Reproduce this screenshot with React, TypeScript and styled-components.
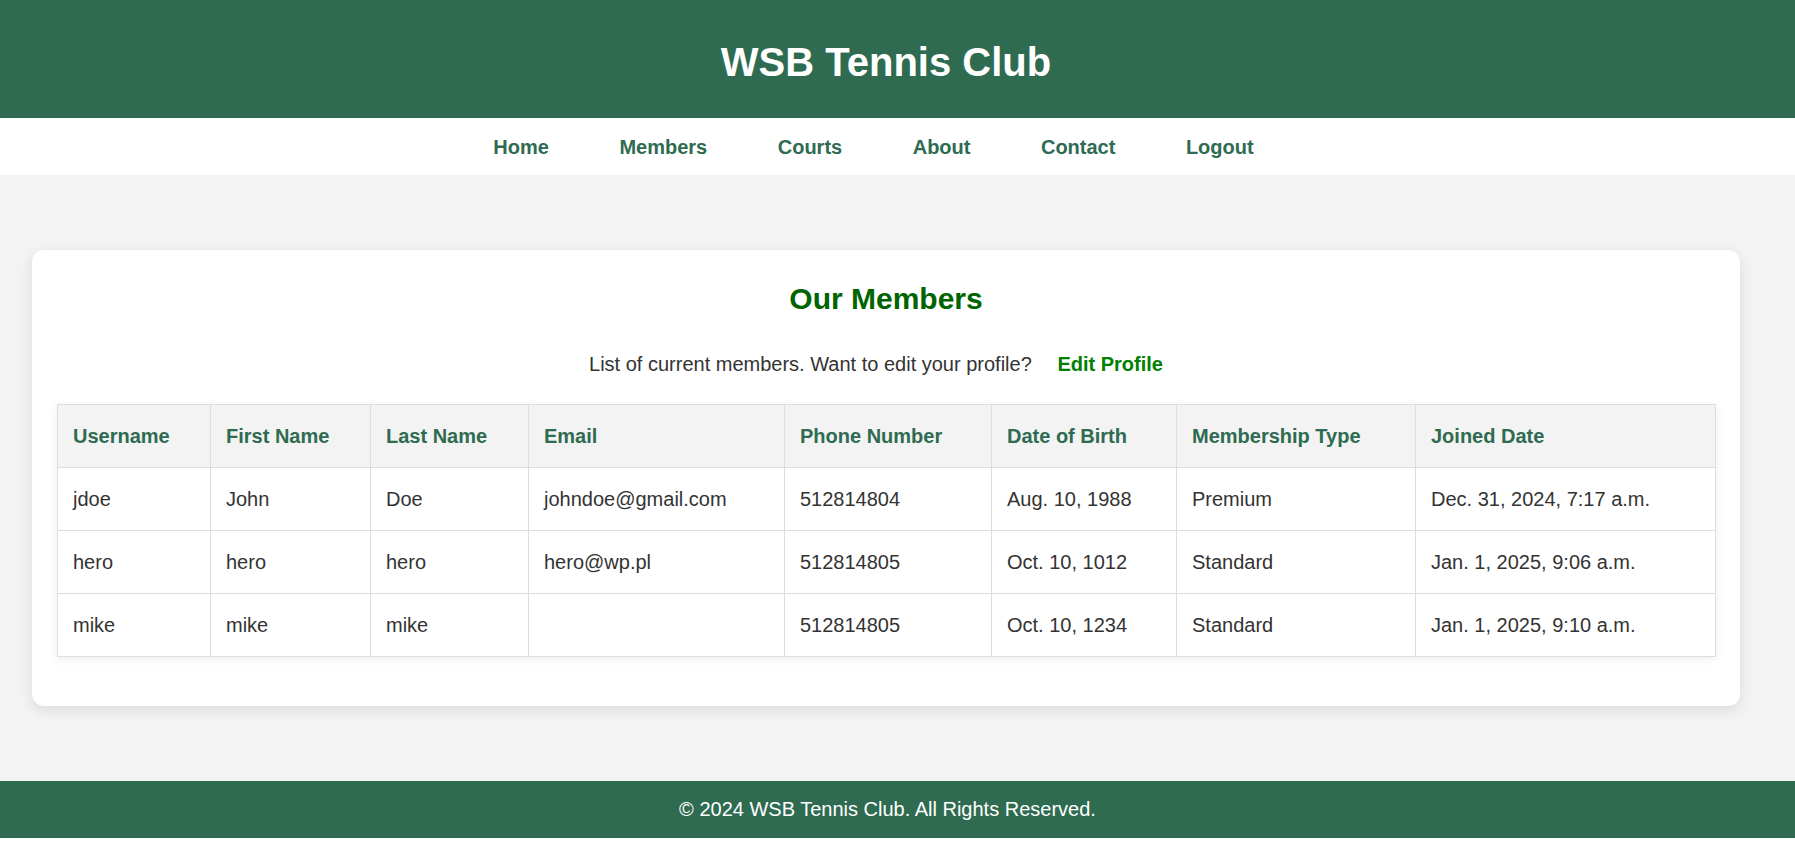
import React from "react";
import styled, { createGlobalStyle } from "styled-components";

const GlobalStyle = createGlobalStyle`
  html, body {
    margin: 0;
    padding: 0;
    background: #ffffff;
  }
  body {
    font-family: "Liberation Sans", Arial, sans-serif;
    color: #333333;
  }
  * { box-sizing: border-box; }
`;

const GREEN = "#2e6b51";

const Header = styled.header`
  background: ${GREEN};
  padding: 39px 23px 33px 0;
  text-align: center;
`;

const SiteTitle = styled.h1`
  margin: 0;
  font-size: 40px;
  line-height: 46px;
  font-weight: 700;
  color: #ffffff;
`;

const Nav = styled.nav`
  background: #ffffff;
  padding: 18px 48px 16px 0;
`;

const NavList = styled.ul`
  list-style: none;
  margin: 0;
  padding: 0;
  display: flex;
  justify-content: center;
  gap: 70.5px;
`;

const NavLink = styled.a`
  display: block;
  font-size: 20px;
  line-height: 23px;
  font-weight: 700;
  color: ${GREEN};
  text-decoration: none;
`;

const Main = styled.main`
  background: #f3f3f3;
  padding: 75px 55px 75px 32px;
`;

const Card = styled.section`
  background: #ffffff;
  border-radius: 12px;
  box-shadow: 0 4px 14px rgba(0, 0, 0, 0.1);
  padding: 25px;
`;

const CardTitle = styled.h2`
  margin: 7px 0 0;
  text-align: center;
  font-size: 30px;
  line-height: 34px;
  font-weight: 700;
  color: #006400;
`;

const Intro = styled.p`
  margin: 37px 0 0;
  text-align: center;
  font-size: 20px;
  line-height: 23px;
  color: #333333;
`;

const EditLink = styled.a`
  padding: 0 20px;
  font-weight: 700;
  color: #008000;
  text-decoration: none;
`;

const Table = styled.table`
  width: 100%;
  margin: 28px 0 24px;
  border-collapse: collapse;
  table-layout: fixed;
  box-shadow: 0 2px 10px rgba(0, 0, 0, 0.07);
  font-size: 20px;
  line-height: 23px;
`;

const HeadCell = styled.th`
  background: #f3f3f3;
  border: 1px solid #dddddd;
  padding: 20px 15px 19px;
  text-align: left;
  font-weight: 700;
  color: ${GREEN};
`;

const Cell = styled.td`
  background: #ffffff;
  border: 1px solid #dddddd;
  padding: 20px 15px 19px;
  text-align: left;
  color: #333333;
  white-space: nowrap;
`;

const Footer = styled.footer`
  background: ${GREEN};
  padding: 17px 20px 17px 0;
  text-align: center;
  font-size: 20px;
  line-height: 23px;
  color: #ffffff;
`;

const navItems = ["Home", "Members", "Courts", "About", "Contact", "Logout"];

const columns: { label: string; width: number }[] = [
  { label: "Username", width: 153 },
  { label: "First Name", width: 160 },
  { label: "Last Name", width: 158 },
  { label: "Email", width: 256 },
  { label: "Phone Number", width: 207 },
  { label: "Date of Birth", width: 185 },
  { label: "Membership Type", width: 239 },
  { label: "Joined Date", width: 300 },
];

const members: string[][] = [
  ["jdoe", "John", "Doe", "johndoe@gmail.com", "512814804", "Aug. 10, 1988", "Premium", "Dec. 31, 2024, 7:17 a.m."],
  ["hero", "hero", "hero", "hero@wp.pl", "512814805", "Oct. 10, 1012", "Standard", "Jan. 1, 2025, 9:06 a.m."],
  ["mike", "mike", "mike", "", "512814805", "Oct. 10, 1234", "Standard", "Jan. 1, 2025, 9:10 a.m."],
];

export default function App() {
  return (
    <>
      <GlobalStyle />
      <Header>
        <SiteTitle>WSB Tennis Club</SiteTitle>
      </Header>
      <Nav>
        <NavList>
          {navItems.map((item) => (
            <li key={item}>
              <NavLink href="#">{item}</NavLink>
            </li>
          ))}
        </NavList>
      </Nav>
      <Main>
        <Card>
          <CardTitle>Our Members</CardTitle>
          <Intro>
            List of current members. Want to edit your profile?{" "}
            <EditLink href="#">Edit Profile</EditLink>
          </Intro>
          <Table>
            <colgroup>
              {columns.map((c) => (
                <col key={c.label} style={{ width: c.width }} />
              ))}
            </colgroup>
            <thead>
              <tr>
                {columns.map((c) => (
                  <HeadCell key={c.label}>{c.label}</HeadCell>
                ))}
              </tr>
            </thead>
            <tbody>
              {members.map((row, i) => (
                <tr key={i}>
                  {row.map((v, j) => (
                    <Cell key={j}>{v}</Cell>
                  ))}
                </tr>
              ))}
            </tbody>
          </Table>
        </Card>
      </Main>
      <Footer>© 2024 WSB Tennis Club. All Rights Reserved.</Footer>
    </>
  );
}
